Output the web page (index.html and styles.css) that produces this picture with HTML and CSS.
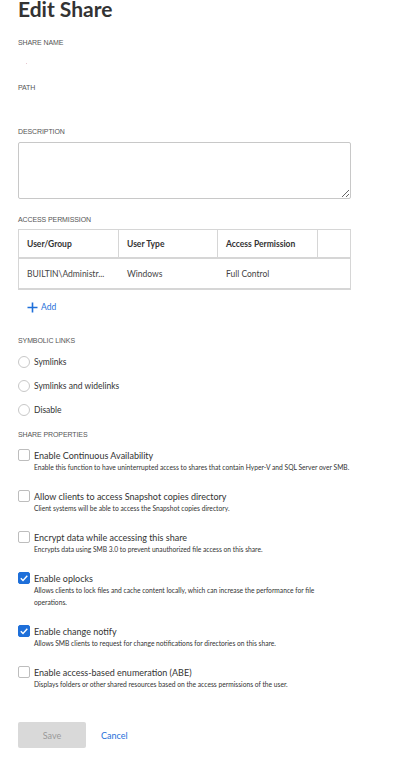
FILE: index.html
```html
<!DOCTYPE html>
<html>
<head>
	<title>Edit Share</title>
	<link rel="stylesheet" href="styles.css">
</head>
<body>
	<div class="page">
		<h1 class="title">Edit Share</h1>

		<div class="field first">
			<div class="label">SHARE NAME</div>
			<div class="value"><span class="dot"></span></div>
		</div>
		<div class="field second">
			<div class="label">PATH</div>
			<div class="value"></div>
		</div>

		<div class="label">DESCRIPTION</div>
		<textarea class="desc"></textarea>

		<div class="label gap-access">ACCESS PERMISSION</div>
		<div class="table">
			<div class="row head">
				<div class="cell c1">User/Group</div>
				<div class="cell c2">User Type</div>
				<div class="cell c3">Access Permission</div>
				<div class="cell c4"></div>
			</div>
			<div class="row">
				<div class="cell c1">BUILTIN\Administr...</div>
				<div class="cell c2">Windows</div>
				<div class="cell c3">Full Control</div>
				<div class="cell c4"></div>
			</div>
		</div>
		<div class="add">
			<svg width="11" height="11" viewBox="0 0 11 11"><path d="M5.5 0.5v10M0.5 5.5h10" stroke="#1e6fd9" stroke-width="1.6" fill="none"/></svg>
			<span>Add</span>
		</div>

		<div class="label gap-sym">SYMBOLIC LINKS</div>
		<div class="radios">
			<div class="radio"><span class="circle"></span>Symlinks</div>
			<div class="radio"><span class="circle"></span>Symlinks and widelinks</div>
			<div class="radio"><span class="circle"></span>Disable</div>
		</div>

		<div class="label gap-props">SHARE PROPERTIES</div>
		<div class="props">
			<div class="prop">
				<div class="prop-title"><span class="box"></span>Enable Continuous Availability</div>
				<div class="prop-desc">Enable this function to have uninterrupted access to shares that contain Hyper-V and SQL Server over SMB.</div>
			</div>
			<div class="prop">
				<div class="prop-title"><span class="box"></span>Allow clients to access Snapshot copies directory</div>
				<div class="prop-desc">Client systems will be able to access the Snapshot copies directory.</div>
			</div>
			<div class="prop">
				<div class="prop-title"><span class="box"></span>Encrypt data while accessing this share</div>
				<div class="prop-desc">Encrypts data using SMB 3.0 to prevent unauthorized file access on this share.</div>
			</div>
			<div class="prop">
				<div class="prop-title"><span class="box checked"><svg width="12" height="12" viewBox="0 0 12 12"><path d="M2.8 6.2l2.2 2.2 4.3-4.6" stroke="#fff" stroke-width="1.4" fill="none"/></svg></span>Enable oplocks</div>
				<div class="prop-desc wrap">Allows clients to lock files and cache content locally, which can increase the performance for file operations.</div>
			</div>
			<div class="prop">
				<div class="prop-title"><span class="box checked"><svg width="12" height="12" viewBox="0 0 12 12"><path d="M2.8 6.2l2.2 2.2 4.3-4.6" stroke="#fff" stroke-width="1.4" fill="none"/></svg></span>Enable change notify</div>
				<div class="prop-desc">Allows SMB clients to request for change notifications for directories on this share.</div>
			</div>
			<div class="prop">
				<div class="prop-title"><span class="box"></span>Enable access-based enumeration (ABE)</div>
				<div class="prop-desc">Displays folders or other shared resources based on the access permissions of the user.</div>
			</div>
		</div>

		<div class="actions">
			<button class="save">Save</button>
			<a class="cancel">Cancel</a>
		</div>
	</div>
</body>
</html>
```

FILE: styles.css
```css
body {
	margin: 0;
	background: #fff;
	font-family: Lato, "Open Sans", sans-serif;
	color: #333;
}

.page {
	padding: 0 18px;
	width: 333px;
}

.title {
	font-size: 21px;
	font-weight: 700;
	line-height: 18px;
	margin: 0;
	color: #333;
}

.label {
	font-family: "Liberation Sans", Arial, sans-serif;
	font-size: 7px;
	line-height: 10px;
	color: #555;
	letter-spacing: -0.1px;
}

.field {
	margin-bottom: 10px;
}

.field.first {
	margin-top: 20px;
}

.field.second {
	margin-bottom: 9px;
}

.value {
	height: 25px;
	position: relative;
}

.dot {
	position: absolute;
	left: 8px;
	top: 15px;
	width: 1px;
	height: 1px;
	background: #e8c8d0;
}

.desc {
	display: block;
	box-sizing: border-box;
	width: 333px;
	height: 57px;
	margin: 5px 0 0;
	border: 1px solid #c8c8c8;
	border-radius: 2px;
	resize: vertical;
	font-family: inherit;
}

.gap-access {
	margin-top: 16px;
}

.table {
	margin-top: 4px;
	border: 1px solid #d6d6d6;
	border-bottom-width: 2px;
	width: 331px;
}

.row {
	display: flex;
	height: 29px;
	font-size: 8.5px;
	color: #444;
}

.row.head {
	height: 27px;
	border-bottom: 2px solid #d6d6d6;
	font-weight: 700;
	color: #333;
}

.cell {
	display: flex;
	align-items: center;
	padding-left: 8px;
	box-sizing: border-box;
}

.head .cell {
	border-right: 1px solid #d6d6d6;
}

.head .c4 {
	border-right: none;
}

.c1 { width: 100px; }
.c2 { width: 99px; }
.c3 { width: 100px; }
.c4 { width: 32px; }

.add {
	display: flex;
	align-items: center;
	gap: 3px;
	height: 16px;
	margin-top: 9px;
	padding-left: 9px;
	color: #1e6fd9;
	font-size: 8.5px;
}

.gap-sym {
	margin-top: 21px;
}

.radios {
	margin-top: 4px;
}

.radio {
	display: flex;
	align-items: center;
	height: 24px;
	font-size: 8.5px;
	color: #333;
}

.circle {
	width: 10px;
	height: 10px;
	border: 1px solid #c8c8c8;
	border-radius: 50%;
	margin-right: 4px;
}

.gap-props {
	margin-top: 8px;
}

.props {
	margin-top: 9px;
}

.prop {
	margin-bottom: 17px;
}

.prop-title {
	display: flex;
	align-items: center;
	height: 12px;
	font-size: 9px;
	color: #333;
}

.box {
	box-sizing: border-box;
	width: 12px;
	height: 12px;
	border: 1px solid #bdbdbd;
	border-radius: 2px;
	margin-right: 4px;
	flex-shrink: 0;
}

.box.checked {
	background: #1e6fd9;
	border-color: #1e6fd9;
}

.box svg {
	display: block;
	margin: -1px;
}

.prop-desc {
	padding-left: 16px;
	font-size: 6.7px;
	line-height: 12px;
	color: #333;
	white-space: nowrap;
}

.prop-desc.wrap {
	white-space: normal;
	width: 300px;
}

.actions {
	display: flex;
	align-items: center;
	margin-top: 32px;
}

.save {
	width: 68px;
	height: 26px;
	border: none;
	border-radius: 2px;
	background: #d9d9d9;
	color: #999;
	font-family: inherit;
	font-size: 9px;
}

.cancel {
	margin-left: 15px;
	color: #1e6fd9;
	font-size: 9px;
}
```
